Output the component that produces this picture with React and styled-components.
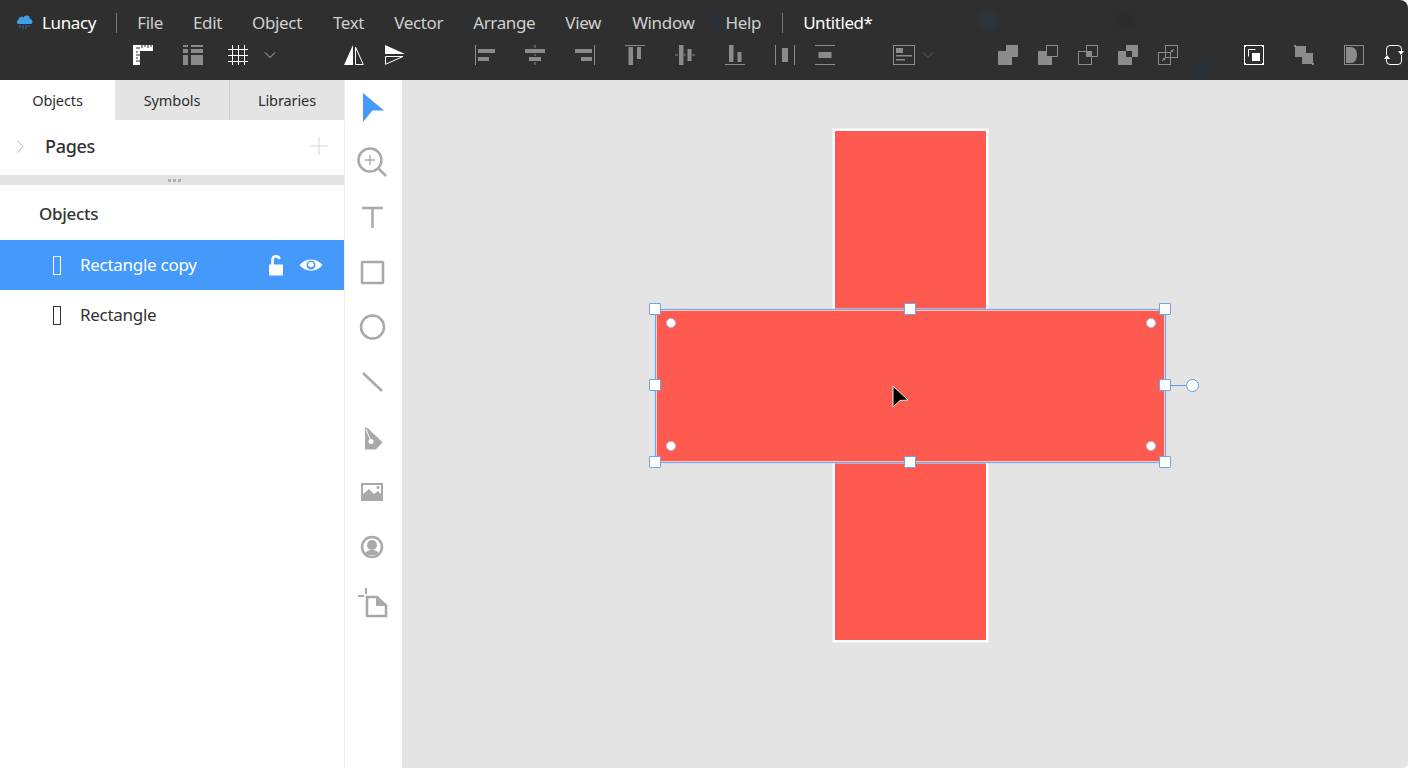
import styled, { createGlobalStyle } from "styled-components";

const GlobalStyle = createGlobalStyle`
  html, body {
    margin: 0;
    padding: 0;
    background: #fff;
    overflow: hidden;
  }
  * { box-sizing: border-box; }
`;

const Window = styled.div`
  width: 1408px;
  height: 768px;
  display: flex;
  flex-direction: column;
  font-family: "Noto Sans", "Open Sans", sans-serif;
  overflow: hidden;
`;

const TitleBar = styled.header`
  height: 80px;
  flex: none;
  border-top-right-radius: 8px;
  background:
    radial-gradient(circle 14px at 988px 20px, #2a3644, transparent),
    radial-gradient(circle 14px at 1203px 68px, #26323f, transparent),
    radial-gradient(circle 12px at 716px 20px, #2a323c, transparent),
    radial-gradient(circle 16px at 1125px 20px, #2b2b2b, transparent),
    #2f2f2f;
`;

const MenuRow = styled.div`
  height: 45px;
  display: flex;
  align-items: center;
  padding: 0 0 0 16px;
`;

const Logo = styled.svg`
  width: 17px;
  height: 15px;
  margin-right: 9px;
`;

const AppName = styled.span`
  font-size: 17px;
  letter-spacing: -0.35px;
  color: #fff;
`;

const MenuDivider = styled.span`
  width: 1px;
  height: 20px;
  background: #777;
  margin: 0 ${(p) => p.$right}px 0 ${(p) => p.$left}px;
`;

const MenuItem = styled.span`
  font-size: 17px;
  letter-spacing: -0.35px;
  color: #cfcfcf;
  margin-right: ${(p) => p.$gap}px;
`;

const DocName = styled.span`
  font-size: 17px;
  letter-spacing: -0.45px;
  color: #fff;
`;

const ToolRow = styled.div`
  display: flex;
  align-items: center;
  height: 20px;
  padding-left: 133px;
`;

const ToolGroup = styled.div`
  display: flex;
  align-items: center;
  gap: ${(p) => p.$gap}px;
  margin-left: ${(p) => p.$left || 0}px;
`;

const ToolIcon = styled.svg.attrs({ viewBox: "0 0 20 20" })`
  width: 20px;
  height: 20px;
  flex: none;
  fill: currentColor;
  stroke: none;
  color: ${(p) => (p.$light ? "#fff" : "#8b8b8b")};
  .line {
    fill: none;
    stroke: currentColor;
    stroke-width: 1;
  }
`;

const PanelIcon = styled(ToolIcon).attrs({ viewBox: "0 0 22 20" })`
  width: 22px;
`;

const SmallChevron = styled.svg.attrs({ viewBox: "0 0 12 8" })`
  width: 12px;
  height: 8px;
  fill: none;
  stroke: ${(p) => (p.$dim ? "#5d5d5d" : "#bdbdbd")};
  stroke-width: 1;
`;

const Body = styled.main`
  flex: 1;
  display: flex;
  min-height: 0;
`;

const Panel = styled.aside`
  width: 345px;
  flex: none;
  border-right: 1px solid #ececec;
  background: #fff;
`;

const Tabs = styled.div`
  display: grid;
  grid-template-columns: 115px 114px 115px;
  height: 40px;
`;

const Tab = styled.div`
  display: flex;
  align-items: center;
  justify-content: center;
  font-size: 14.5px;
  letter-spacing: -0.1px;
  color: #2d2d2d;
  background: ${(p) => (p.$active ? "#fff" : "#e4e4e4")};
  border-left: ${(p) => (p.$divided ? "1px solid #cdcdcd" : "none")};
`;

const PagesRow = styled.div`
  height: 55px;
  display: flex;
  align-items: center;
  padding: 0 16px 0 17px;
`;

const PagesChevron = styled.svg.attrs({ viewBox: "0 0 7 13" })`
  width: 7px;
  height: 13px;
  margin: -3px 21px 0 0;
  fill: none;
  stroke: #b5b5b5;
  stroke-width: 1;
`;

const PagesTitle = styled.span`
  flex: 1;
  margin-top: -4px;
  font-size: 18px;
  font-weight: 500;
  letter-spacing: -0.3px;
  color: #333;
`;

const AddPage = styled.svg.attrs({ viewBox: "0 0 18 18" })`
  width: 18px;
  height: 18px;
  margin-top: -3px;
  fill: none;
  stroke: #e4e4e4;
  stroke-width: 1.5;
`;

const Splitter = styled.div`
  height: 10px;
  background: #e4e4e4;
  display: flex;
  align-items: center;
  justify-content: center;
  gap: 2px;
  padding-left: 5px;
`;

const SplitDot = styled.span`
  width: 3px;
  height: 3px;
  background: #b0b0b0;
`;

const SectionTitle = styled.div`
  height: 55px;
  display: flex;
  align-items: center;
  padding: 1px 0 0 39px;
  font-size: 17px;
  font-weight: 500;
  letter-spacing: -0.3px;
  color: #333;
`;

const LayerRow = styled.div`
  height: 50px;
  display: flex;
  align-items: center;
  padding: 0 21px 0 53px;
  background: ${(p) => (p.$selected ? "#4499fb" : "transparent")};
  color: ${(p) => (p.$selected ? "#fff" : "#333")};
`;

const LayerGlyph = styled.span`
  width: 8px;
  height: 19px;
  flex: none;
  border: 1.5px solid currentColor;
  margin-right: 19px;
`;

const LayerName = styled.span`
  flex: 1;
  font-size: 17px;
  letter-spacing: -0.28px;
  margin-top: -1px;
`;

const LayerAction = styled.svg`
  fill: #fff;
  margin-left: ${(p) => p.$gap || 0}px;
`;

const ToolStrip = styled.nav`
  width: 57px;
  flex: none;
  background: #fff;
  display: flex;
  flex-direction: column;
`;

const StripSlot = styled.div`
  height: 55px;
  flex: none;
  display: flex;
  align-items: center;
  justify-content: center;
  padding-right: 3px;
`;

const StripIcon = styled.svg.attrs({ viewBox: "0 0 32 32" })`
  width: 32px;
  height: 32px;
  margin-top: -2px;
  fill: none;
  stroke: #a9a9a9;
  stroke-width: 2.5;
`;

const SolidStripIcon = styled(StripIcon)`
  stroke: none;
`;

const Canvas = styled.section`
  flex: 1;
  position: relative;
  background: #e4e4e4;
  border-bottom-right-radius: 5px;
`;

const Shape = styled.div`
  position: absolute;
  left: ${(p) => p.$x}px;
  top: ${(p) => p.$y}px;
  width: ${(p) => p.$w}px;
  height: ${(p) => p.$h}px;
  background: #ff5a4f;
  border: 2px solid #fff;
  box-shadow: 0 0 0 1px rgba(255, 255, 255, 0.4);
`;

const Selection = styled.div`
  position: absolute;
  left: 253px;
  top: 229px;
  width: 511px;
  height: 154px;
  border: 1px solid #6ba6ea;
  box-shadow: inset 0 0 0 1px #ffc9c5, 0 0 0 1px rgba(150, 190, 240, 0.25);
`;

const Handle = styled.span`
  position: absolute;
  left: ${(p) => p.$x}px;
  top: ${(p) => p.$y}px;
  width: 12px;
  height: 12px;
  margin: -6px 0 0 -6px;
  background: #fff;
  border: 1.5px solid #6ba6ea;
  border-radius: 1px;
`;

const RadiusDot = styled.span`
  position: absolute;
  left: ${(p) => p.$x}px;
  top: ${(p) => p.$y}px;
  width: 10px;
  height: 10px;
  margin: -5px 0 0 -5px;
  background: #fff;
  border: 1.5px solid #a9c4e8;
  border-radius: 50%;
`;

const RotateLine = styled.span`
  position: absolute;
  left: 769px;
  top: 305px;
  width: 16px;
  height: 1px;
  background: #5f9fe8;
`;

const RotateKnob = styled.span`
  position: absolute;
  left: 784px;
  top: 299px;
  width: 13px;
  height: 13px;
  background: #fff;
  border: 1.5px solid #5f9fe8;
  border-radius: 50%;
`;

const Pointer = styled.svg.attrs({ viewBox: "0 0 18 24" })`
  position: absolute;
  left: 490px;
  top: 305px;
  width: 18px;
  height: 24px;
`;

const menu = [
  ["File", 30],
  ["Edit", 30],
  ["Object", 31],
  ["Text", 30],
  ["Vector", 30],
  ["Arrange", 30],
  ["View", 31],
  ["Window", 31],
  ["Help", 0],
];

const handles = [
  [253, 229], [508, 229], [763, 229],
  [253, 305], [763, 305],
  [253, 382], [508, 382], [763, 382],
];

const dots = [
  [269, 243], [749, 243],
  [269, 366], [749, 366],
];

const alignIcons = [
  <><rect x="0" width="1" height="20" /><rect x="3" y="4" width="17" height="4" /><rect x="3" y="12" width="11" height="4" /></>,
  <><rect x="9.5" width="1" height="3" /><rect x="9.5" y="9" width="1" height="2" /><rect x="9.5" y="17" width="1" height="3" /><rect y="4" width="20" height="4" /><rect x="4" y="12" width="12" height="4" /></>,
  <><rect x="19" width="1" height="20" /><rect y="4" width="17" height="4" /><rect x="6" y="12" width="11" height="4" /></>,
  <><rect width="20" height="1" /><rect x="3.5" y="2" width="4.5" height="18" /><rect x="12" y="2" width="4" height="12" /></>,
  <><rect y="9.5" width="3" height="1" /><rect x="9" y="9.5" width="2" height="1" /><rect x="17" y="9.5" width="3" height="1" /><rect x="4" width="4.5" height="20" /><rect x="12.5" y="4" width="4" height="12" /></>,
  <><rect y="19" width="20" height="1" /><rect x="4" width="4.5" height="17" /><rect x="12.5" y="7" width="4" height="10" /></>,
  <><rect width="1" height="20" /><rect x="19" width="1" height="20" /><rect x="7" y="3" width="6" height="14" /></>,
  <><rect width="20" height="1" /><rect y="19" width="20" height="1" /><rect x="3.5" y="7" width="13" height="6" /></>,
];

function BooleanIcons() {
  return (
    <>
      <ToolIcon><path d="M8 0H20V12H14V20H0V6H8Z" /></ToolIcon>
      <ToolIcon>
        <path d="M0 6H8V12H14V20H0Z" />
        <rect className="line" x="8.5" y="0.5" width="11" height="11" />
      </ToolIcon>
      <ToolIcon>
        <rect className="line" x="0.5" y="6.5" width="13" height="13" />
        <rect className="line" x="8.5" y="0.5" width="11" height="11" />
        <rect x="8" y="6" width="6" height="6" />
      </ToolIcon>
      <ToolIcon><path d="M8 0H20V12H14V6H8Z" /><path d="M0 6H8V12H14V20H0Z" /></ToolIcon>
      <ToolIcon>
        <rect className="line" x="0.5" y="7.5" width="12" height="12" />
        <rect className="line" x="7.5" y="0.5" width="12" height="12" />
        <path className="line" d="M4 16L8 12M12 8L16 4" />
        <circle cx="6" cy="14" r="1.3" />
        <circle cx="14" cy="6" r="1.3" />
      </ToolIcon>
    </>
  );
}

const stripIcons = [
  <svg key="arrow" width="32" height="32" viewBox="0 0 32 32"><path d="M7 1L28 18.5H16.5L7 30Z" fill="#4499fb" /></svg>,
  <StripIcon key="zoom"><circle cx="14" cy="14" r="11.5" /><path d="M22.5 22.5L30 30" /><path d="M14 9V19M9 14H19" strokeWidth="1.3" /></StripIcon>,
  <StripIcon key="text"><path d="M6 7H27M16.5 7V27" /></StripIcon>,
  <StripIcon key="rect"><rect x="6" y="6" width="21" height="21" rx="0.5" /></StripIcon>,
  <StripIcon key="oval"><circle cx="16.5" cy="16" r="11.5" /></StripIcon>,
  <StripIcon key="line"><path d="M7 7L26 25" /></StripIcon>,
  <SolidStripIcon key="pen">
    <path d="M9 6L13 8C16 12 22 16 26.5 21.5L20 28.5H9Z" fill="#a9a9a9" />
    <path d="M9.8 8L14.5 19" stroke="#fff" strokeWidth="1" />
    <circle cx="15" cy="20.5" r="2.5" fill="#fff" />
  </SolidStripIcon>,
  <SolidStripIcon key="image">
    <path d="M5 7H27V25H5Z" fill="#a9a9a9" />
    <path d="M7 9H25V18L22 15L18 18L13 13L7 18Z" fill="#fff" />
    <circle cx="22" cy="11.5" r="1.5" fill="#a9a9a9" />
  </SolidStripIcon>,
  <StripIcon key="avatar">
    <circle cx="16" cy="16" r="10" />
    <circle cx="16" cy="14" r="5" fill="#a9a9a9" stroke="none" />
    <path d="M9 24C10 19.5 13 19 16 19S22 19.5 23 24Z" fill="#a9a9a9" stroke="none" />
  </StripIcon>,
  <StripIcon key="board">
    <path d="M2 10H8M10 2V8" strokeWidth="2" />
    <path d="M11 11H21L30 19.5V30H11Z" />
    <path d="M20 11V20H30Z" fill="#a9a9a9" stroke="none" />
  </StripIcon>,
];

export default function App() {
  return (
    <Window>
      <GlobalStyle />
      <TitleBar>
        <MenuRow>
          <Logo viewBox="0 0 17 15">
            <path d="M3 9C0.5 9 0 5.5 2.5 5C2.5 2 6 1 7.5 2.5C9 -0.5 14 0 14 4C17 4 17.5 9 14 9Z" fill="#3f9fe6" />
            <path d="M4 10V13M7 10V14M10 10V14M13 10V12" stroke="#2f6ea8" strokeWidth="1" />
          </Logo>
          <AppName>Lunacy</AppName>
          <MenuDivider $left={20} $right={20} />
          {menu.map(([label, gap]) => (
            <MenuItem key={label} $gap={gap}>{label}</MenuItem>
          ))}
          <MenuDivider $left={21} $right={20} />
          <DocName>Untitled*</DocName>
        </MenuRow>
        <ToolRow>
          <ToolGroup $gap={30}>
            <ToolIcon $light>
              <path d="M0 0H20V6H7V20H0Z" />
              <path d="M3 3H7M3 7H5M3 10H7M3 13H5M3 16H7M9 0V3M12 0V2M15 0V3M18 0V2" stroke="#2f2f2f" strokeWidth="1" />
            </ToolIcon>
            <ToolIcon>
              <rect x="0" y="0" width="5" height="2" />
              <rect x="0" y="4" width="5" height="4" />
              <rect x="0" y="10" width="5" height="10" />
              <rect x="8" y="0" width="12" height="2" />
              <rect x="8" y="4" width="12" height="4" />
              <rect x="8" y="10" width="12" height="10" />
            </ToolIcon>
          </ToolGroup>
          <ToolGroup $left={25} $gap={16}>
            <ToolIcon $light>
              <path className="line" d="M0 4.5H20M0 10.5H20M0 16.5H20M4.5 0V20M10.5 0V20M16.5 0V20" />
            </ToolIcon>
            <SmallChevron><path d="M1 1.5L6 6.5L11 1.5" /></SmallChevron>
          </ToolGroup>
          <ToolGroup $left={68} $gap={21}>
            <ToolIcon $light>
              <path d="M9 0V20H0Z" />
              <path className="line" d="M11.5 2V19.5H19.3Z" />
            </ToolIcon>
            <ToolIcon $light>
              <path d="M0 0L20 9H0Z" />
              <path className="line" d="M0.5 11.5H18L0.5 19.3Z" />
            </ToolIcon>
          </ToolGroup>
          <ToolGroup $left={70} $gap={30}>
            {alignIcons.slice(0, 7).map((icon, i) => <ToolIcon key={i}>{icon}</ToolIcon>)}
          </ToolGroup>
          <ToolGroup $left={20}>
            <ToolIcon>{alignIcons[7]}</ToolIcon>
          </ToolGroup>
          <ToolGroup $left={58} $gap={7}>
            <PanelIcon>
              <rect className="line" x="0.5" y="0.5" width="21" height="19" />
              <rect x="3" y="3" width="7" height="5" />
              <rect x="3" y="10" width="16" height="1.5" />
              <rect x="3" y="14" width="9" height="1.5" />
            </PanelIcon>
            <SmallChevron $dim><path d="M1 1.5L6 6.5L11 1.5" /></SmallChevron>
          </ToolGroup>
          <ToolGroup $left={64} $gap={20}>
            <BooleanIcons />
          </ToolGroup>
          <ToolGroup $left={66} $gap={30}>
            <ToolIcon $light>
              <rect className="line" x="0.5" y="0.5" width="19" height="19" />
              <path d="M0 0H2V2H0ZM18 0H20V2H18ZM0 18H2V20H0ZM18 18H20V20H18Z" />
              <path className="line" d="M4.5 11.5V4.5H11.5" />
              <rect x="8" y="8" width="8" height="8" />
            </ToolIcon>
            <ToolIcon>
              <path d="M1 1H12V8H8V12H1Z" />
              <rect x="8" y="8" width="11" height="11" />
              <rect x="0" y="0" width="2" height="2" />
              <rect x="18" y="18" width="2" height="2" />
            </ToolIcon>
            <ToolIcon>
              <rect className="line" x="0.5" y="0.5" width="19" height="19" />
              <path d="M2 2H7C11 2 13 6 13 10S11 18 7 18H2Z" />
            </ToolIcon>
          </ToolGroup>
          <ToolGroup $left={20}>
            <ToolIcon $light>
              <path className="line" d="M2.5 10V4Q2.5 0.5 6 0.5H14Q17.5 0.5 17.5 4V6M17.5 10V16Q17.5 19.5 14 19.5H6Q2.5 19.5 2.5 16V14" />
              <path d="M14 6H20L17 10ZM0 14H6L3 10Z" />
            </ToolIcon>
          </ToolGroup>
        </ToolRow>
      </TitleBar>

      <Body>
        <Panel>
          <Tabs>
            <Tab $active>Objects</Tab>
            <Tab>Symbols</Tab>
            <Tab $divided>Libraries</Tab>
          </Tabs>
          <PagesRow>
            <PagesChevron><path d="M0.5 0.5L6 6.5L0.5 12.5" /></PagesChevron>
            <PagesTitle>Pages</PagesTitle>
            <AddPage><path d="M9 0V18M0 9H18" /></AddPage>
          </PagesRow>
          <Splitter>
            <SplitDot />
            <SplitDot />
            <SplitDot />
          </Splitter>
          <SectionTitle>Objects</SectionTitle>
          <LayerRow $selected>
            <LayerGlyph />
            <LayerName>Rectangle copy</LayerName>
            <LayerAction width="16" height="22" viewBox="0 0 16 22">
              <path d="M1 10.5H15V20C15 21 14.5 21.5 13.5 21.5H2.5C1.5 21.5 1 21 1 20Z" />
              <path d="M4.5 11V6C4.5 1.5 10.5 1 11.5 5" fill="none" stroke="#fff" strokeWidth="2.6" />
            </LayerAction>
            <LayerAction $gap={15} width="24" height="16" viewBox="0 0 24 16">
              <path fillRule="evenodd" d="M0.5 8C6 0.5 18 0.5 23.5 8C18 15.5 6 15.5 0.5 8ZM12 3.5A4.5 4.5 0 1 0 12 12.5A4.5 4.5 0 1 0 12 3.5Z" />
              <circle cx="12" cy="7.5" r="2.8" />
            </LayerAction>
          </LayerRow>
          <LayerRow>
            <LayerGlyph />
            <LayerName>Rectangle</LayerName>
          </LayerRow>
        </Panel>

        <ToolStrip>
          {stripIcons.map((icon) => (
            <StripSlot key={icon.key}>{icon}</StripSlot>
          ))}
        </ToolStrip>

        <Canvas>
          <Shape $x={431} $y={49} $w={155} $h={513} />
          <Shape $x={253} $y={229} $w={511} $h={154} />
          <Selection />
          {dots.map(([x, y]) => <RadiusDot key={`${x}-${y}`} $x={x} $y={y} />)}
          <RotateLine />
          <RotateKnob />
          {handles.map(([x, y]) => <Handle key={`${x}-${y}`} $x={x} $y={y} />)}
          <Pointer>
            <path d="M1 1L16 15L8 15.5L1 22Z" fill="#000" stroke="#e8e8e8" strokeWidth="1" />
          </Pointer>
        </Canvas>
      </Body>
    </Window>
  );
}
